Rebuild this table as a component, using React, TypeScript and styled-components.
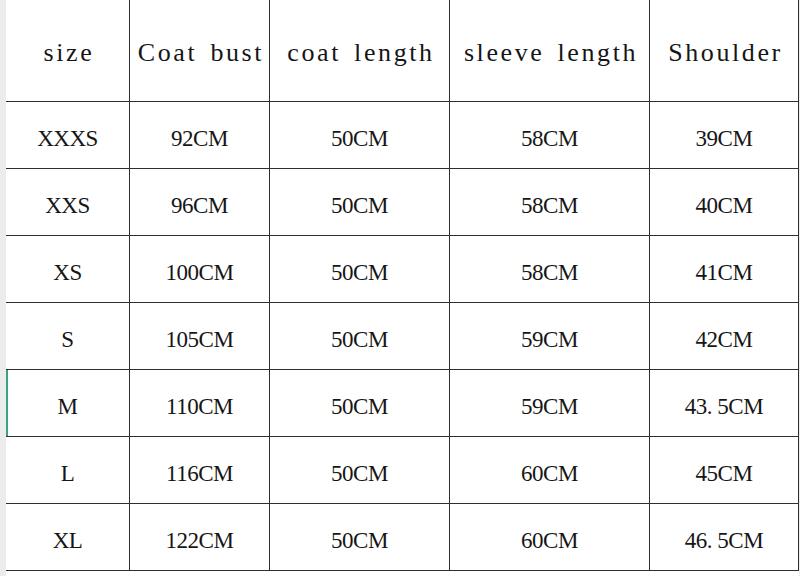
import styled, { createGlobalStyle } from "styled-components";

const GlobalStyle = createGlobalStyle`
	html, body {
		margin: 0;
		padding: 0;
		background: #ffffff;
	}
	* {
		box-sizing: border-box;
	}
`;

const Page = styled.div`
	display: flex;
	width: 800px;
	height: 576px;
	overflow: hidden;
	background: #ffffff;
`;

const Gutter = styled.div<{ $width: number }>`
	width: ${(props) => props.$width}px;
	flex-shrink: 0;
	background: #ececec;
`;

const Sheet = styled.div`
	display: grid;
	grid-template-columns: 124px 140px 180px 200px 149px;
	grid-template-rows: 102px repeat(7, 67px);
	align-self: flex-start;
	font-family: "Liberation Serif", "Noto Sans CJK SC", serif;
	color: #161616;
`;

const Cell = styled.div<{ $head?: boolean; $active?: boolean }>`
	display: flex;
	align-items: center;
	justify-content: center;
	border-right: 1px solid #2e2e2e;
	border-bottom: 1px solid #2e2e2e;
	font-size: ${(props) => (props.$head ? "26px" : "23px")};
	white-space: nowrap;
	letter-spacing: ${(props) => (props.$head ? "2.6px" : "-0.5px")};
	word-spacing: ${(props) => (props.$head ? "4px" : "0")};
	padding-top: ${(props) => (props.$head ? "5px" : "7px")};
	padding-left: ${(props) => (props.$head ? "3px" : "0")};
	box-shadow: ${(props) => (props.$active ? "inset 2px 0 0 #3aa57a" : "none")};
`;

const head = ["size", "Coat bust", "coat length", "sleeve length", "Shoulder"];

const rows = [
	["XXXS", "92CM", "50CM", "58CM", "39CM"],
	["XXS", "96CM", "50CM", "58CM", "40CM"],
	["XS", "100CM", "50CM", "58CM", "41CM"],
	["S", "105CM", "50CM", "59CM", "42CM"],
	["M", "110CM", "50CM", "59CM", "43. 5CM"],
	["L", "116CM", "50CM", "60CM", "45CM"],
	["XL", "122CM", "50CM", "60CM", "46. 5CM"],
];

function App() {
	return (
		<Page>
			<GlobalStyle />
			<Gutter $width={6} />
			<Sheet>
				{head.map((h) => (
					<Cell key={h} $head>
						{h}
					</Cell>
				))}
				{rows.map((row) =>
					row.map((value, i) => (
						<Cell key={row[0] + i} $active={row[0] === "M" && i === 0}>
							{value}
						</Cell>
					))
				)}
			</Sheet>
			<Gutter $width={1} />
		</Page>
	);
}

export default App;
